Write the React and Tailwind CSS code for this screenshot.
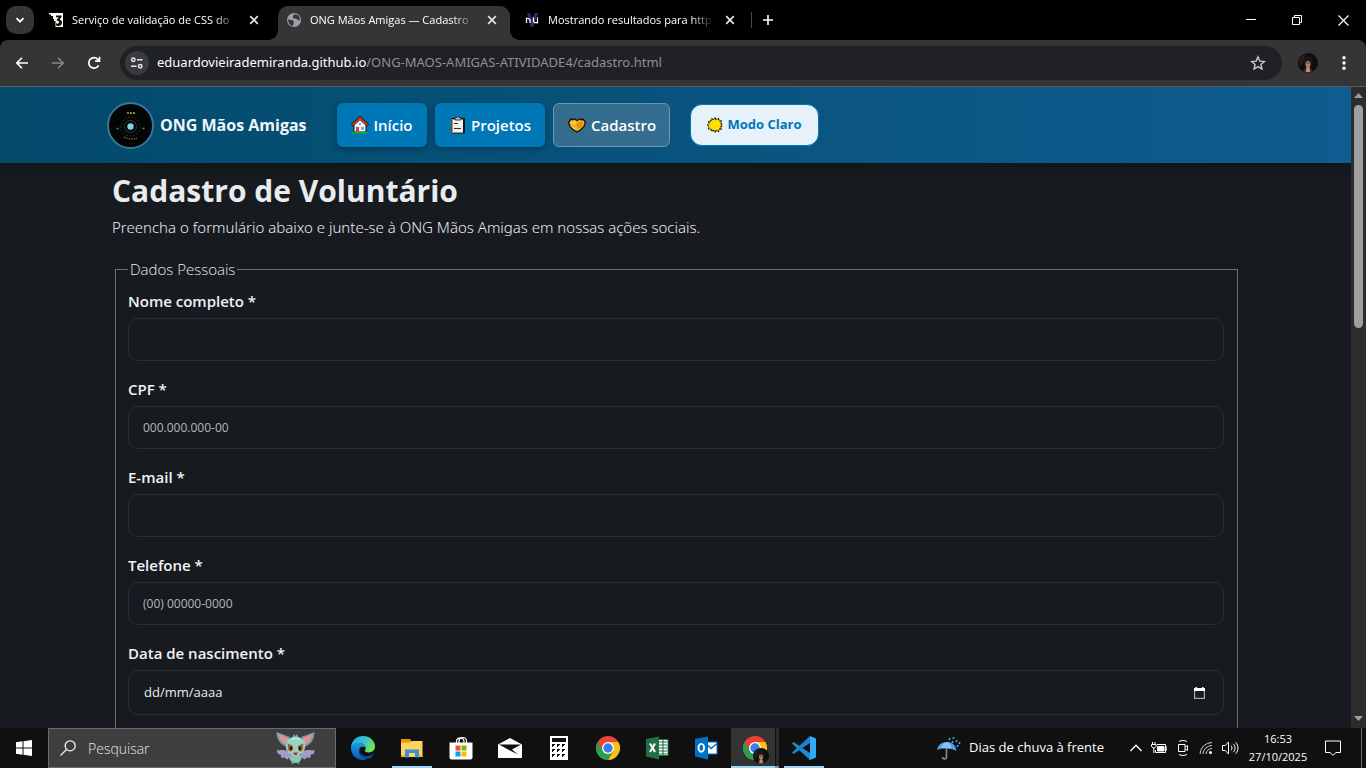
import React from "react";

const FONT = "font-['Open_Sans','Noto_Sans',sans-serif]";

/* ---------- browser icons ---------- */
function CloseX({ label }) {
  return (
    <button aria-label={label} className="flex size-4 shrink-0 items-center justify-center text-[#e3e3e3]">
      <svg width="10" height="10" viewBox="0 0 10 10" stroke="currentColor" strokeWidth="1.7" fill="none">
        <path d="M1.2 1.2l7.6 7.6M8.8 1.2L1.2 8.8" />
      </svg>
    </button>
  );
}

function CssFavicon() {
  return (
    <svg width="16" height="16" viewBox="0 0 16 16">
      <path d="M6 1h9v14H6z" fill="#fffdf0" />
      <path d="M1 1h7v1.500H1zM3 2.500h4V4H3zM5 4h3v3H5z" fill="#fffdf0" />
      <path d="M8 3.500h5.500v1.500l-2 2.500c1.700.3 2.500 1.500 2.500 3 0 2.300-1.500 3.500-3.500 3.500-1 0-2-.4-2.500-1v-2c1 1 3 1 3-.7 0-1.300-1-1.600-2.200-1.600V7.500l1.900-2.300H8z" fill="#0c0c0c" />
      <path d="M5 9h2.500v6H5z" fill="#000" />
    </svg>
  );
}

function GlobeFavicon() {
  return (
    <svg width="16" height="16" viewBox="0 0 16 16">
      <circle cx="8" cy="8" r="7" fill="#9aa0a6" />
      <path d="M2.200 7.500c2 .3 4.500.2 5.500 1.700.7 1.300-.5 2-.4 3.300l-.3 1.400C4 13.500 2 11 2.200 7.500zM8.500 2.200l3.300.9 1.600 2.200.4 3.200-2-.4-1.700-1.700-2.300.1-1.300-1.300 1.100-1.200-.3-1z" fill="#35363a" />
    </svg>
  );
}

function NuFavicon() {
  return (
    <svg width="16" height="16" viewBox="0 0 16 16">
      <path d="M3 1h3l2 6 3-6h3L9.500 14H6.500z" fill="#2f2c6b" />
      <circle cx="8" cy="13" r="2" fill="#2f2c6b" />
      <path d="M2.500 11V5.500M2.500 6.500h2.200L6 7.800V11M9.500 5.500v4l1.200 1.200H13M13.500 5.500v6" stroke="#fff" strokeWidth="1.200" fill="none" />
    </svg>
  );
}

function Tab({ icon, title, active }) {
  return (
    <div
      className={
        active
          ? "relative flex h-[34px] w-[232px] items-center gap-2 self-end rounded-t-[10px] bg-[#353535] px-2 pb-1.5"
          : "flex h-[34px] w-[238px] items-center gap-2 self-end px-2 pb-1.5"
      }
    >
      {active && (
        <>
          <span className="absolute -left-2.5 bottom-0 size-2.5 bg-[radial-gradient(circle_at_0_0,#000_10px,#353535_10px)]" />
          <span className="absolute -right-2.5 bottom-0 size-2.5 bg-[radial-gradient(circle_at_100%_0,#000_10px,#353535_10px)]" />
        </>
      )}
      {icon}
      <span className="w-[166px] whitespace-nowrap text-[11px] text-white [mask-image:linear-gradient(to_right,#000_86%,transparent)]">
        {title}
      </span>
      <CloseX label={"Fechar " + title} />
    </div>
  );
}

function Avatar({ size }) {
  return (
    <svg width={size} height={size} viewBox="0 0 20 20">
      <circle cx="10" cy="10" r="10" fill="#0d0e11" />
      <path d="M1 8c1-4 4-6 7-7L3 14z" fill="#252119" />
      <path d="M5 9c0-4 2-6 5-6s5 2 5 6l-1 3H6z" fill="#17181c" />
      <rect x="7.500" y="8" width="5" height="6.500" rx="2.400" fill="#b97a60" />
      <path d="M8 9.500h4v1H8z" fill="#5d3a33" />
      <path d="M5 19l2-4h6l2 4a10 10 0 0 1-10 0z" fill="#3b2521" />
      <path d="M8.500 14h3l.8 5h-4.600z" fill="#c08a76" />
    </svg>
  );
}

function BrowserChrome() {
  return (
    <div className="shrink-0 bg-black">
      <div className="flex h-10 items-center">
        <button aria-label="Pesquisar guias" className="ml-1.5 flex size-7 items-center justify-center rounded-[10px] bg-[#353535]">
          <svg width="10" height="10" viewBox="0 0 10 10" fill="none" stroke="#fff" strokeWidth="1.800">
            <path d="M1.500 3.200L5 6.700l3.500-3.500" />
          </svg>
        </button>
        <div className="ml-1.5 flex h-full">
          <Tab icon={<CssFavicon />} title="Serviço de validação de CSS do" />
          <Tab icon={<GlobeFavicon />} title="ONG Mãos Amigas — Cadastro" active />
          <div className="ml-1.5 flex h-full">
            <Tab icon={<NuFavicon />} title="Mostrando resultados para http" />
          </div>
        </div>
        <div className="-ml-[3px] h-4 w-px bg-[#474747]" />
        <button aria-label="Nova guia" className="ml-2.5 flex size-3 items-center justify-center">
          <svg width="12" height="12" viewBox="0 0 12 12" stroke="#fff" strokeWidth="1.600"><path d="M6 1v10M1 6h10" /></svg>
        </button>
        <div className="ml-auto flex h-full items-center text-white">
          <button aria-label="Minimizar" className="flex h-full w-[46px] items-center justify-center">
            <svg width="10" height="10" viewBox="0 0 10 10" stroke="currentColor"><path d="M0 4.500h10" /></svg>
          </button>
          <button aria-label="Restaurar" className="flex h-full w-[46px] items-center justify-center">
            <svg width="10" height="10" viewBox="0 0 10 10" fill="none" stroke="currentColor"><path d="M.5 2.500h7v7h-7zM2.500 2.500v-2h7v7h-2" /></svg>
          </button>
          <button aria-label="Fechar janela" className="flex h-full w-[46px] items-center justify-center">
            <svg width="11" height="11" viewBox="0 0 11 11" stroke="currentColor" strokeWidth="1.200"><path d="M.5.5l10 10M10.500.5l-10 10" /></svg>
          </button>
        </div>
      </div>
      <div className="flex h-[47px] items-center rounded-t-lg border-b border-[#5c5c5c] bg-[#353535] pr-3.5">
        <button aria-label="Voltar" className="ml-[15px] flex size-3.5 items-center justify-center">
          <svg width="14" height="14" viewBox="0 0 14 14" fill="none" stroke="#fff" strokeWidth="1.600"><path d="M13 7H2M7 1.700L1.800 7 7 12.300" /></svg>
        </button>
        <button aria-label="Avançar" className="ml-[22px] flex size-3.5 items-center justify-center">
          <svg width="14" height="14" viewBox="0 0 14 14" fill="none" stroke="#868686" strokeWidth="1.600"><path d="M1 7h11M7 1.700L12.200 7 7 12.300" /></svg>
        </button>
        <button aria-label="Recarregar" className="ml-[22px] flex size-3.5 items-center justify-center">
          <svg width="14" height="14" viewBox="0 0 14 14" fill="none" stroke="#fff" strokeWidth="1.700"><path d="M11.600 9.300A5.200 5.200 0 1 1 10.800 3.400L12.500 5" /><path d="M12.500.8V5.200H8.100" /></svg>
        </button>
        <div className="ml-[19px] flex h-[34px] flex-1 items-center rounded-full bg-[#202124] pl-[5px] pr-4">
          <button aria-label="Ver informações do site" className="flex size-6 items-center justify-center rounded-full bg-[#393a3d]">
            <svg width="14" height="14" viewBox="0 0 14 14" fill="none" stroke="#e8e8e8" strokeWidth="1.500">
              <circle cx="3.300" cy="3.800" r="1.700" /><path d="M7 3.800h5.500M1 10.200h5.500" /><circle cx="10.200" cy="10.200" r="1.700" />
            </svg>
          </button>
          <div className="ml-2 font-['Noto_Sans',sans-serif] text-[13px] text-[#8f9093]">
            <span className="text-white">eduardovieirademiranda.github.io</span>/ONG-MAOS-AMIGAS-ATIVIDADE4/cadastro.html
          </div>
          <button aria-label="Adicionar aos favoritos" className="ml-auto">
            <svg width="16" height="16" viewBox="0 0 16 16" fill="none" stroke="#c7c7c7" strokeWidth="1.400"><path d="M8 1.800l1.800 4.300 4.600.4-3.500 3 1.100 4.500L8 11.600 4 14l1.100-4.500-3.500-3 4.600-.4z" /></svg>
          </button>
        </div>
        <button aria-label="Perfil" className="ml-4"><Avatar size={20} /></button>
        <button aria-label="Menu" className="ml-[18px] flex w-4 justify-center">
          <svg width="4" height="14" viewBox="0 0 4 14" fill="#fff"><circle cx="2" cy="1.800" r="1.700" /><circle cx="2" cy="7" r="1.700" /><circle cx="2" cy="12.200" r="1.700" /></svg>
        </button>
      </div>
    </div>
  );
}

/* ---------- page icons ---------- */
function HouseIcon() {
  return (
    <svg width="18" height="18" viewBox="0 0 18 18">
      <path d="M3 9v7h12V9L9 3.500z" fill="#f3f3f3" stroke="#111" />
      <path d="M1 9.500L9 1.500l8 8" fill="none" stroke="#111" strokeWidth="3" />
      <path d="M1.500 9.200L9 2l7.500 7.200" fill="none" stroke="#e8391f" strokeWidth="1.800" />
      <path d="M5 11h3v5H5z" fill="#d8432b" />
      <path d="M10 11h3v3h-3zM8 7h2v2H8z" fill="#4cc3ee" />
      <path d="M1 16h16v1.500H1z" fill="#12b31d" />
    </svg>
  );
}

function ClipboardIcon() {
  return (
    <svg width="18" height="18" viewBox="0 0 18 18">
      <rect x="2" y="2" width="14" height="15.500" rx="1" fill="#111" />
      <path d="M2.500 3H15v14H2.500z" fill="#c08a68" />
      <path d="M4 4h10v12H4z" fill="#eef0f2" />
      <path d="M14 3h2v14h-2z" fill="#111" />
      <path d="M6 1.500h2L9 .5l1 1h2V4H6z" fill="#b9bdc2" stroke="#111" strokeWidth=".8" />
      <path d="M5 7.500h4M5 12.500h7" stroke="#2a3038" />
    </svg>
  );
}

function HeartHandsIcon() {
  return (
    <svg width="20" height="18" viewBox="0 0 20 18">
      <path d="M1.500 6.500L4 3l1.500 1L7 2.800 10 4.500l3-1.700 1.500 1.200L16 3l2.500 3.500-1.500 4-3.500 3.500-3.500 2-3.500-2L3 10.500z" fill="#f0ab22" stroke="#16120a" strokeWidth="1.300" />
      <path d="M4 5l4-.5 2 2-3 3-3.500-1.500z" fill="#fcc540" />
      <path d="M9 8.500l3.500-3L16 7l-1 3.500-3 2z" fill="#dc920f" />
      <path d="M4 10l5 3.500" stroke="#ffc740" strokeWidth="1.500" />
    </svg>
  );
}

function SunIcon() {
  return (
    <svg width="16" height="16" viewBox="0 0 16 16">
      <path d="M8 1l1.500 1.700 2-1 .7 2.200 2.200.2-.4 2.200L15.300 8 14 9.700l.4 2.200-2.200.2-.7 2.200-2-1L8 15l-1.500-1.700-2 1-.7-2.200-2.200-.2L2 9.700.700 8 2 6.300l-.4-2.200 2.200-.2.7-2.200 2 1z" fill="#ffd900" stroke="#1b1500" strokeWidth="1.200" strokeDasharray="2.500 1" />
      <circle cx="8" cy="8" r="5" fill="#ffdf00" />
    </svg>
  );
}

function Logo() {
  return (
    <svg width="47" height="47" viewBox="0 0 47 47">
      <circle cx="23.500" cy="23.500" r="22.500" fill="#020405" stroke="#3a7596" strokeWidth="2" />
      <circle cx="23.500" cy="24.500" r="9.500" fill="none" stroke="#263136" strokeDasharray="2 1.500" />
      <circle cx="23.500" cy="24.500" r="6" fill="none" stroke="#2f3a40" />
      <circle cx="23.500" cy="24.500" r="3.200" fill="#7fd3dc" />
      <path d="M20 10h2v2h-2zM23 10h2v2h-2zM26 10h2v2h-2z" fill="#9c7d25" />
      <path d="M17 35c4 2.500 9 2.500 13 1" stroke="#6b5720" strokeWidth="1.500" strokeDasharray="1.500 1" fill="none" />
      <path d="M9.500 26.500h2M35.500 26.500h2" stroke="#3d8e96" strokeWidth="1.500" />
    </svg>
  );
}

const field =
  "block w-full rounded-[10px] border border-[#2a2e33] bg-transparent px-3.5 text-[12px] text-[#e9ecef] outline-none placeholder:text-[#b4b7ba]";

function Field({ id, label, placeholder, type = "text" }) {
  return (
    <div className="mb-4">
      <label htmlFor={id} className="block h-[29px] text-[15px] font-semibold leading-6 text-[#f1f3f5]">{label} *</label>
      <input id={id} type={type} placeholder={placeholder} className={field + " h-[43px]"} />
    </div>
  );
}

function Page() {
  return (
    <div className="flex min-h-0 flex-1 bg-[#171b1f] text-[#e9ecef]">
      <div className="min-w-0 flex-1 overflow-hidden">
        <header className="flex h-[76px] items-center bg-gradient-to-r from-[#034a6b] to-[#0f5c90] shadow-[0_2px_10px_rgba(0,0,0,0.35)]">
          <div className="mx-auto flex w-full max-w-[1137px] items-center">
            <a href="#inicio" className="flex w-[230px] items-center gap-1.5 text-[16px] font-bold text-[#f1f6fa]">
              <Logo />
              ONG Mãos Amigas
            </a>
            <nav className="flex gap-2 text-[15px] font-semibold text-white">
              <a href="#inicio" className="flex h-11 w-[90px] items-center justify-center gap-1 rounded-md bg-[#0077b6] shadow-[0_2px_6px_rgba(0,0,0,0.3)]"><HouseIcon />Início</a>
              <a href="#projetos" className="flex h-11 w-[110px] items-center justify-center gap-1 rounded-md bg-[#0077b6] shadow-[0_2px_6px_rgba(0,0,0,0.3)]"><ClipboardIcon />Projetos</a>
              <a href="#cadastro" className="flex h-11 w-[117px] items-center justify-center gap-1 rounded-md border border-[#6b96b0] bg-[#356d8f]"><HeartHandsIcon />Cadastro</a>
            </nav>
            <button className="ml-5 flex h-[42px] w-[129px] items-center justify-center gap-1 rounded-xl border border-[#0077b6] bg-[#e6f1f9] text-[13px] font-bold text-[#0077b6]">
              <SunIcon />Modo Claro
            </button>
          </div>
        </header>
        <main className="mx-auto max-w-[1127px]">
          <h1 className="pt-2 text-[30px] font-bold leading-10">Cadastro de Voluntário</h1>
          <p className="mt-1 font-['Noto_Sans',sans-serif] text-[15px] font-light leading-6">Preencha o formulário abaixo e junte-se à ONG Mãos Amigas em nossas ações sociais.</p>
          <form className="mt-[18px]">
            <fieldset className="ml-[3px] mr-px border border-[#6f6f6f] pb-8 pl-3 pr-[13px]">
              <legend className="px-0.5 text-[15px] font-light leading-6">Dados Pessoais</legend>
              <div className="mt-2">
                <Field id="nome" label="Nome completo" />
                <Field id="cpf" label="CPF" placeholder="000.000.000-00" />
                <Field id="email" label="E-mail" type="email" />
                <Field id="telefone" label="Telefone" placeholder="(00) 00000-0000" type="tel" />
                <div>
                  <label htmlFor="nascimento" className="block h-[29px] text-[15px] font-semibold leading-6 text-[#f1f3f5]">Data de nascimento *</label>
                  <div className="flex h-[45px] items-center rounded-[10px] border border-[#2a2e33] pl-[15px] pr-[18px]">
                    <input id="nascimento" placeholder="dd/mm/aaaa" className="min-w-0 flex-1 bg-transparent text-[13px] outline-none placeholder:text-[#e9ecef]" />
                    <button type="button" aria-label="Abrir calendário">
                      <svg width="11" height="12" viewBox="0 0 11 12"><path d="M.6 2.500h9.800v8.900H.6z" fill="none" stroke="#a9a9ab" strokeWidth="1.200" /><path d="M0 1h1.500V0H3v1h5V0h1.500v1H11v3H0z" fill="#fff" /></svg>
                    </button>
                  </div>
                </div>
              </div>
            </fieldset>
          </form>
        </main>
      </div>
      <div className="flex w-[15px] shrink-0 flex-col items-center bg-[#2c2c2c] pb-[7px] pt-1.5">
        <svg width="9" height="5" viewBox="0 0 9 5"><path d="M4.500 0L9 5H0z" fill="#9f9f9f" /></svg>
        <div className="mt-[7px] h-[223px] w-[9px] rounded-full bg-[#9f9f9f]" />
        <svg className="mt-auto" width="9" height="5" viewBox="0 0 9 5"><path d="M4.500 5L9 0H0z" fill="#9f9f9f" /></svg>
      </div>
    </div>
  );
}

/* ---------- taskbar ---------- */
function Bat() {
  return (
    <svg width="40" height="34" viewBox="0 0 40 34">
      <path d="M14 21C9 18.500 5 18.500 .5 19.500L2 23l2.500.5L5.500 27l3-.5 2.500 2 4-3zM25 21c5-2.500 9-2.500 14-1.500L37.500 23l-2.500.5-1 3.500-3-.5-2.500 2-4-3z" fill="#a79acb" />
      <path d="M14 6L.5 1C.5 8 4 14 11 16zM25 6l13.500-5C38.500 8 35 14 28 16z" fill="#6fa39c" />
      <path d="M12.500 7.500L2.500 3c1 5 4 9.500 8.500 11zM26.500 7.500l10-4.500c-1 5-4 9.500-8.500 11z" fill="#ee8d97" />
      <ellipse cx="19.500" cy="27" rx="6" ry="5" fill="#86c6bb" />
      <ellipse cx="19.500" cy="15" rx="9.800" ry="9.500" fill="#9ad1c3" />
      <path d="M13 10c2-4 10-5 13 0-4-2-9-2-13 0z" fill="#b4e2d6" />
      <path d="M16.500 6l1.500-3 1.500 2L21 3l1.500 3z" fill="#6fae9f" />
      <path d="M12 14.500c1.500-1.200 4 .3 5.200 2-.3 3-1.500 4-2.700 4-1.800 0-3-3-2.500-6zM27 14.500c-1.500-1.200-4 .3-5.200 2 .3 3 1.500 4 2.700 4 1.800 0 3-3 2.500-6z" fill="#b45a1d" />
      <ellipse cx="15" cy="17.200" rx="1.200" ry="2" fill="#2b140a" /><ellipse cx="24" cy="17.200" rx="1.200" ry="2" fill="#2b140a" />
      <path d="M11.500 13l5.500 2.500M27.500 13L22 15.500" stroke="#3a716a" />
      <path d="M17 21.500h5l-1.500 2.500h-2z" fill="#c22a32" />
      <path d="M15.500 31h2.500l-.5 2h-2zM21 31h2.500v2h-2z" fill="#609e95" />
    </svg>
  );
}

function EdgeIcon() {
  return (
    <svg width="24" height="24" viewBox="0 0 24 24">
      <defs>
        <linearGradient id="edgeTop" x1="0" y1="0" x2="1" y2=".5"><stop offset="0" stopColor="#1f9fe0" /><stop offset=".5" stopColor="#35c1d5" /><stop offset="1" stopColor="#6fe35a" /></linearGradient>
        <linearGradient id="edgeLow" x1="0" y1="0" x2="0" y2="1"><stop offset="0" stopColor="#1b9ce5" /><stop offset="1" stopColor="#0a59b5" /></linearGradient>
      </defs>
      <path d="M0 11C.5 4.500 5.500 0 12 0c7 0 12 5 12 10.500 0 3.700-2.600 5.900-6.200 5.900-2.600 0-4-.9-4-1.700 0-.7.900-1 .9-2.700C14.700 9 12 7 8.500 7 4.500 7 1.500 8.800 0 11z" fill="url(#edgeTop)" />
      <path d="M0 12c0-3 3.500-5.200 8-5.200 4 0 6.700 2.500 6.700 5.200-2-2-6-1.500-6.500 2.200-.6 4.300 3.300 8.800 8.300 8.300C15 23.500 13.500 24 12 24 5 24 0 18.500 0 12z" fill="url(#edgeLow)" />
      <path d="M8.200 14c-.2 3.500 3.300 6 7.500 6 2.700 0 5-1 6.500-2.300.5-.4.8 0 .5.500C21 21.500 18.500 23 16.500 22.800 11 23.500 7 18 8.200 14z" fill="#0c4a92" />
    </svg>
  );
}

function ExplorerIcon() {
  return (
    <svg width="22" height="19" viewBox="0 0 22 19">
      <path d="M0 0h9l2 3h10v4H0z" fill="#e19a0a" />
      <path d="M0 3.500h9L11 2h10.500v16H0z" fill="#ffd35c" />
      <path d="M4 18.500V10.500h14v8h-4V14H8v4.500z" fill="#3f8fd2" />
      <path d="M0 16h4v2H0zM18 16h3.500v2H18z" fill="#f0b730" />
    </svg>
  );
}

function StoreIcon() {
  return (
    <svg width="24" height="24" viewBox="0 0 24 24">
      <path d="M7.500 7V5a3.800 3.800 0 0 1 7.500 0v2M10 7V4.500A3.800 3.800 0 0 1 17.500 5v2" fill="none" stroke="#fff" strokeWidth="1.200" />
      <path d="M.5 6.500h23v15a2 2 0 0 1-2 2h-19a2 2 0 0 1-2-2z" fill="#fff" />
      <path d="M6.500 9.500h5v5h-5z" fill="#f25022" /><path d="M12.500 9.500h5v5h-5z" fill="#7fba00" />
      <path d="M6.500 15.500h5v5h-5z" fill="#00a4ef" /><path d="M12.500 15.500h5v5h-5z" fill="#ffb900" />
    </svg>
  );
}

function MailIcon() {
  return (
    <svg width="24" height="20" viewBox="0 0 24 20">
      <path d="M0 6.500L12 0l12 6.500V20H0z" fill="#fff" />
      <path d="M1 6.500h22l-9 5 6 5-9-4.500z" fill="#101010" />
    </svg>
  );
}

function CalcIcon() {
  return (
    <svg width="18" height="24" viewBox="0 0 18 24">
      <path d="M0 0h18v24H0z" fill="#fff" /><path d="M2 2h14v4H2z" fill="#101010" />
      {[8, 13, 18].map((y) => [2, 7, 12].map((x) => <path key={x + "-" + y} d={`M${x} ${y}h3v1h-1v1h-1v1h-1z`} fill="#101010" />))}
    </svg>
  );
}

function ChromeIcon() {
  return (
    <svg width="24" height="24" viewBox="0 0 24 24">
      <path d="M1.600 6A12 12 0 0 1 22.400 6H12z" fill="#ea4335" />
      <path d="M1.600 6A12 12 0 0 0 12 24l5.200-9L12 12 6.800 15z" fill="#2f9e4b" />
      <path d="M22.400 6A12 12 0 0 1 12 24l5.200-9L12 6z" fill="#fbc116" />
      <path d="M1.600 6L6.800 15 12 6z" fill="#ea4335" />
      <path d="M1.600 6l5.200 9 2 2-1 6.200A12 12 0 0 1 1.600 6z" fill="#2f9e4b" />
      <circle cx="12" cy="12" r="6" fill="#fff" /><circle cx="12" cy="12" r="4.700" fill="#3b7ded" />
    </svg>
  );
}

function ExcelIcon() {
  return (
    <svg width="24" height="24" viewBox="0 0 24 24">
      <path d="M13 3.500h10v16H13z" fill="#fff" stroke="#217346" />
      <path d="M14 6h8M14 9h8M14 12h8M14 15h8M14 18h8M18 4v15" stroke="#217346" strokeWidth="1.100" />
      <path d="M1 3l13-2.500v23L1 20.500z" fill="#1f7145" />
      <path d="M5 7.500l5 8.500M10 7.500L5 16" stroke="#fff" strokeWidth="2" />
    </svg>
  );
}

function OutlookIcon() {
  return (
    <svg width="24" height="24" viewBox="0 0 24 24">
      <path d="M13 6h10v12H13z" fill="#fff" stroke="#0072c6" />
      <path d="M13 8.500l4 4 6-5" stroke="#0072c6" strokeWidth="1.600" fill="none" />
      <path d="M1 3l13-2.500v23L1 20.500z" fill="#0072c6" />
      <ellipse cx="7.300" cy="11.800" rx="2.800" ry="3.900" stroke="#fff" strokeWidth="1.900" fill="none" />
    </svg>
  );
}

function CodeIcon() {
  return (
    <svg width="24" height="24" viewBox="0 0 24 24">
      <path d="M1.500 6L0 7.500 18 24V17z" fill="#1c8bd8" />
      <path d="M1.500 18L0 16.500 18 0V7z" fill="#1a84cf" />
      <path d="M18 0l6 2.500v19L18 24l-1-.5 1-1z" fill="#31a9f5" />
    </svg>
  );
}

function TaskButton({ label, children, open }) {
  return (
    <button aria-label={label} className="flex h-full w-[49px] flex-col items-center justify-center">
      <span className="flex flex-1 items-center pt-0.5">{children}</span>
      <span className={open ? "h-0.5 w-10 bg-[#9fd8f7]" : "h-0.5 w-10"} />
    </button>
  );
}

function Taskbar() {
  return (
    <div className="flex h-10 shrink-0 items-center bg-[#101010] text-white">
      <button aria-label="Iniciar" className="flex w-12 justify-center">
        <svg width="16" height="16" viewBox="0 0 16 16" fill="#fff"><path d="M0 2.200L6.500 1.300V7.500H0zM7.500 1.200L16 0v7.500H7.500zM0 8.500h6.500v6.200L0 13.800zM7.500 8.500H16V16l-8.500-1.200z" /></svg>
      </button>
      <div className="flex h-full w-72 items-center border border-[#6b6b6b] bg-[#3e3e3e] pl-[11px] pr-[19px]">
        <svg width="16" height="16" viewBox="0 0 16 16" fill="none" stroke="#f1f1f1" strokeWidth="1.300"><circle cx="10.200" cy="5.800" r="5" /><path d="M6.500 9.500L.5 15.500" /></svg>
        <input aria-label="Pesquisar" placeholder="Pesquisar" className="ml-3 min-w-0 flex-1 bg-transparent text-[14px] font-light outline-none placeholder:text-[#e4e4e4]" />
        <Bat />
      </div>
      <div className="ml-0.5 flex h-full">
        <TaskButton label="Edge"><EdgeIcon /></TaskButton>
        <TaskButton label="Explorador de Arquivos" open><ExplorerIcon /></TaskButton>
        <TaskButton label="Microsoft Store"><StoreIcon /></TaskButton>
        <TaskButton label="Email"><MailIcon /></TaskButton>
        <TaskButton label="Calculadora"><CalcIcon /></TaskButton>
        <TaskButton label="Chrome"><ChromeIcon /></TaskButton>
        <TaskButton label="Excel"><ExcelIcon /></TaskButton>
        <TaskButton label="Outlook"><OutlookIcon /></TaskButton>
        <button aria-label="Chrome, perfil ativo" className="flex h-full w-[49px] flex-col pl-px">
          <span className="flex w-full flex-1">
            <span className="flex w-11 items-center bg-[#333] pl-3 pt-0.5">
              <span className="relative">
                <ChromeIcon />
                <span className="absolute -bottom-1 left-2.5"><Avatar size={16} /></span>
              </span>
            </span>
            <span className="w-1 border-l border-[#101010] bg-[#2b2b2b]" />
          </span>
          <span className="flex h-0.5 w-12 bg-[#9fd8f7]"><span className="ml-auto w-1 bg-[#7396a8]" /></span>
        </button>
        <TaskButton label="Visual Studio Code" open><CodeIcon /></TaskButton>
      </div>
      <div className="ml-auto flex h-full items-center">
        <button className="flex items-center gap-2 text-[13px]">
          <svg width="24" height="24" viewBox="0 0 24 24">
            <path d="M0 14C1 8 6 5.500 11 6c5 .5 8 4 8.500 9-6-3-14-3-19.500-1z" fill="#4f9fe8" />
            <path d="M4 12c1-3 3-5 6-6 3 1 4 3 4.500 6.300z" fill="#85c3f7" />
            <path d="M9.500 12.500V21c0 2.500-4 2.500-4 0" fill="none" stroke="#8b8b8b" strokeWidth="1.600" />
            <path d="M13 2l-1 2M17 1l-1 2M20 4l-1 2M16 5l-1 2M23 6l-1 2M21 9l-1 2" stroke="#4aa3ea" strokeWidth="1.600" />
          </svg>
          Dias de chuva à frente
        </button>
        <div className="ml-[26px] flex items-center gap-[9px]">
          <svg width="12" height="8" viewBox="0 0 12 8" fill="none" stroke="#fff" strokeWidth="1.300"><path d="M.5 7L6 1.200 11.500 7" /></svg>
          <svg width="16" height="12" viewBox="0 0 16 12" fill="none" stroke="#fff"><path d="M6 2.500h8.500v8H4.500V8M14.500 5H16v3h-1.500" /><path d="M6.500 4.500h6.500v4.500H6.500z" fill="#fff" /><path d="M1.500 0v2M4 0v2M.5 2.500h4.500v2L3.500 6h-1.500L.5 4.500zM2.800 6v5" /></svg>
          <svg width="14" height="16" viewBox="0 0 14 16" fill="none" stroke="#fff"><path d="M2.500 4.500h6.500v7H2.500zM9 7l2.500-1.500v5L9 9M3 1.500C5.500.2 8.500.2 11 1.500M3 14.500c2.500 1.300 5.500 1.300 8 0" /></svg>
          <svg width="14" height="14" viewBox="0 0 14 14" fill="none" stroke="#cfcfcf"><path d="M1 13A12 12 0 0 1 13 1.500M4 13a9 9 0 0 1 9-8.500M7 13a6 6 0 0 1 6-5.500" /><circle cx="11.500" cy="11.500" r="1.500" fill="#fff" stroke="none" /></svg>
          <svg width="17" height="14" viewBox="0 0 17 14" fill="none" stroke="#fff"><path d="M.5 4.500h2.700L6.500 1v12L3.200 9.500H.5zM9 4.500c1.300 1.500 1.300 3.500 0 5M11.300 2.800c2.300 2.700 2.300 5.700 0 8.400M13.700 1.200c3 3.800 3 7.800 0 11.600" /></svg>
        </div>
        <div className="ml-[7px] w-[64px] whitespace-nowrap text-center text-[11px] leading-[18px]">
          <div>16:53</div>
          <div>27/10/2025</div>
        </div>
        <button aria-label="Notificações" className="ml-[15px]">
          <svg width="16" height="16" viewBox="0 0 16 16" fill="none" stroke="#fff"><path d="M.5 1h15v11.500H11L8 15.300 5 12.500H.5z" /></svg>
        </button>
        <div className="ml-5 mr-1 h-full w-px bg-[#6b6b6b]" />
      </div>
    </div>
  );
}

export default function App() {
  return (
    <div className={FONT + " flex h-screen flex-col overflow-hidden"}>
      <BrowserChrome />
      <Page />
      <Taskbar />
    </div>
  );
}
